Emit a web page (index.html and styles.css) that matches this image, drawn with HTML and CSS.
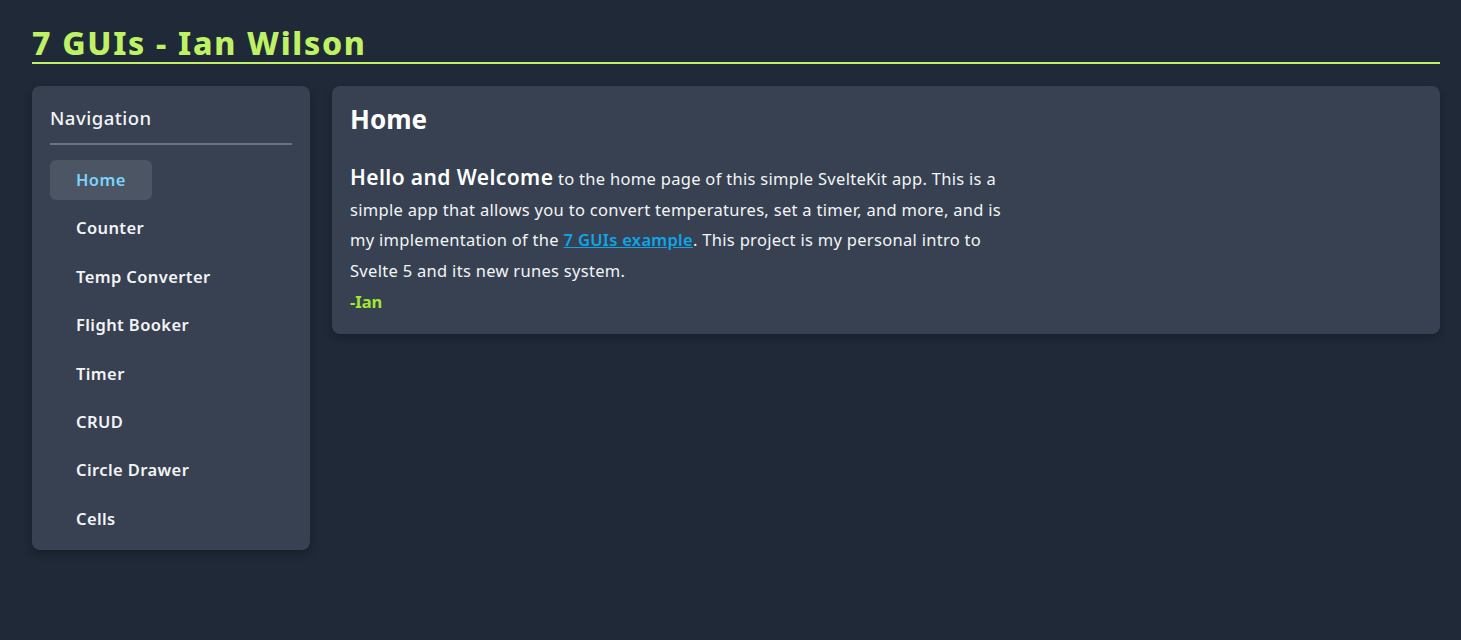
FILE: index.html
```html
<!DOCTYPE html>
<html lang="en">
<head>
<meta charset="utf-8">
<title>7 GUIs - Ian Wilson</title>
<link rel="stylesheet" href="styles.css">
</head>
<body>
<div class="page">
  <header class="site-header">
    <h1 class="site-title">7 GUIs - Ian Wilson</h1>
  </header>
  <div class="layout">
    <nav class="sidebar">
      <h2 class="nav-title">Navigation</h2>
      <ul class="nav-list">
        <li><a class="nav-link active" href="#">Home</a></li>
        <li><a class="nav-link" href="#">Counter</a></li>
        <li><a class="nav-link" href="#">Temp Converter</a></li>
        <li><a class="nav-link" href="#">Flight Booker</a></li>
        <li><a class="nav-link" href="#">Timer</a></li>
        <li><a class="nav-link" href="#">CRUD</a></li>
        <li><a class="nav-link" href="#">Circle Drawer</a></li>
        <li><a class="nav-link" href="#">Cells</a></li>
      </ul>
    </nav>
    <main class="content">
      <h2 class="content-title">Home</h2>
      <p class="intro"><span class="intro-lead">Hello and Welcome</span> to the home page of this simple SvelteKit app. This is a simple app that allows you to convert temperatures, set a timer, and more, and is my implementation of the <a class="intro-link" href="#">7 GUIs example</a>. This project is my personal intro to Svelte 5 and its new runes system.</p>
      <p class="signature">-Ian</p>
    </main>
  </div>
</div>
</body>
</html>
```

FILE: styles.css
```css
* { box-sizing: border-box; }
html, body { margin: 0; padding: 0; }
body {
  background: #1f2937;
  color: #f3f4f6;
  font-family: "Noto Sans", "Open Sans", sans-serif;
}
.page {
  padding: 24px 21px 32px 32px;
}
.site-header {
  border-bottom: 2px solid #bef264;
  margin-bottom: 22px;
}
.site-title {
  margin: 0;
  font-family: "Noto Sans", sans-serif;
  font-size: 32px;
  font-weight: 800;
  line-height: 38px;
  color: #bef264;
  letter-spacing: 1.7px;
}
.layout {
  display: flex;
  align-items: flex-start;
  gap: 22px;
}
.sidebar {
  width: 278px;
  flex: none;
  background: #374151;
  border-radius: 8px;
  padding: 18px 18px 11px;
  box-shadow: 0 4px 8px rgba(0,0,0,0.25);
}
.nav-title {
  margin: 0;
  font-size: 18.5px;
  font-weight: 500;
  letter-spacing: 0.5px;
  line-height: 28px;
  padding-bottom: 11px;
  border-bottom: 2px solid #6b7280;
  color: #f3f4f6;
}
.nav-list {
  list-style: none;
  margin: 15px 0 0;
  padding: 0;
  display: flex;
  flex-direction: column;
  gap: 8.4px;
}
.nav-link {
  display: inline-block;
  height: 40px;
  line-height: 40px;
  padding: 0 26px;
  border-radius: 6px;
  color: #f3f4f6;
  text-decoration: none;
  font-size: 16.5px;
  font-weight: 600;
  letter-spacing: 0.4px;
}
.nav-link.active {
  background: #4b5563;
  color: #7dd3fc;
}
.content {
  flex: 1;
  background: #374151;
  border-radius: 8px;
  padding: 16px 18px 17px;
  box-shadow: 0 4px 8px rgba(0,0,0,0.2);
}
.content-title {
  margin: 0 0 28px;
  font-size: 26px;
  font-weight: 700;
  line-height: 34px;
  color: #ffffff;
}
.intro {
  margin: 0;
  max-width: 672px;
  font-size: 16.5px;
  letter-spacing: 0.3px;
  line-height: 30.7px;
  color: #f3f4f6;
}
.intro-lead {
  font-size: 21px;
  font-weight: 600;
  letter-spacing: 0.4px;
  line-height: 1;
  color: #ffffff;
}
.intro-link {
  color: #0ea5e9;
  font-weight: 600;
  text-decoration: underline;
}
.signature {
  margin: 0;
  font-size: 16.5px;
  line-height: 30px;
  font-weight: 700;
  color: #a3e635;
}
```
